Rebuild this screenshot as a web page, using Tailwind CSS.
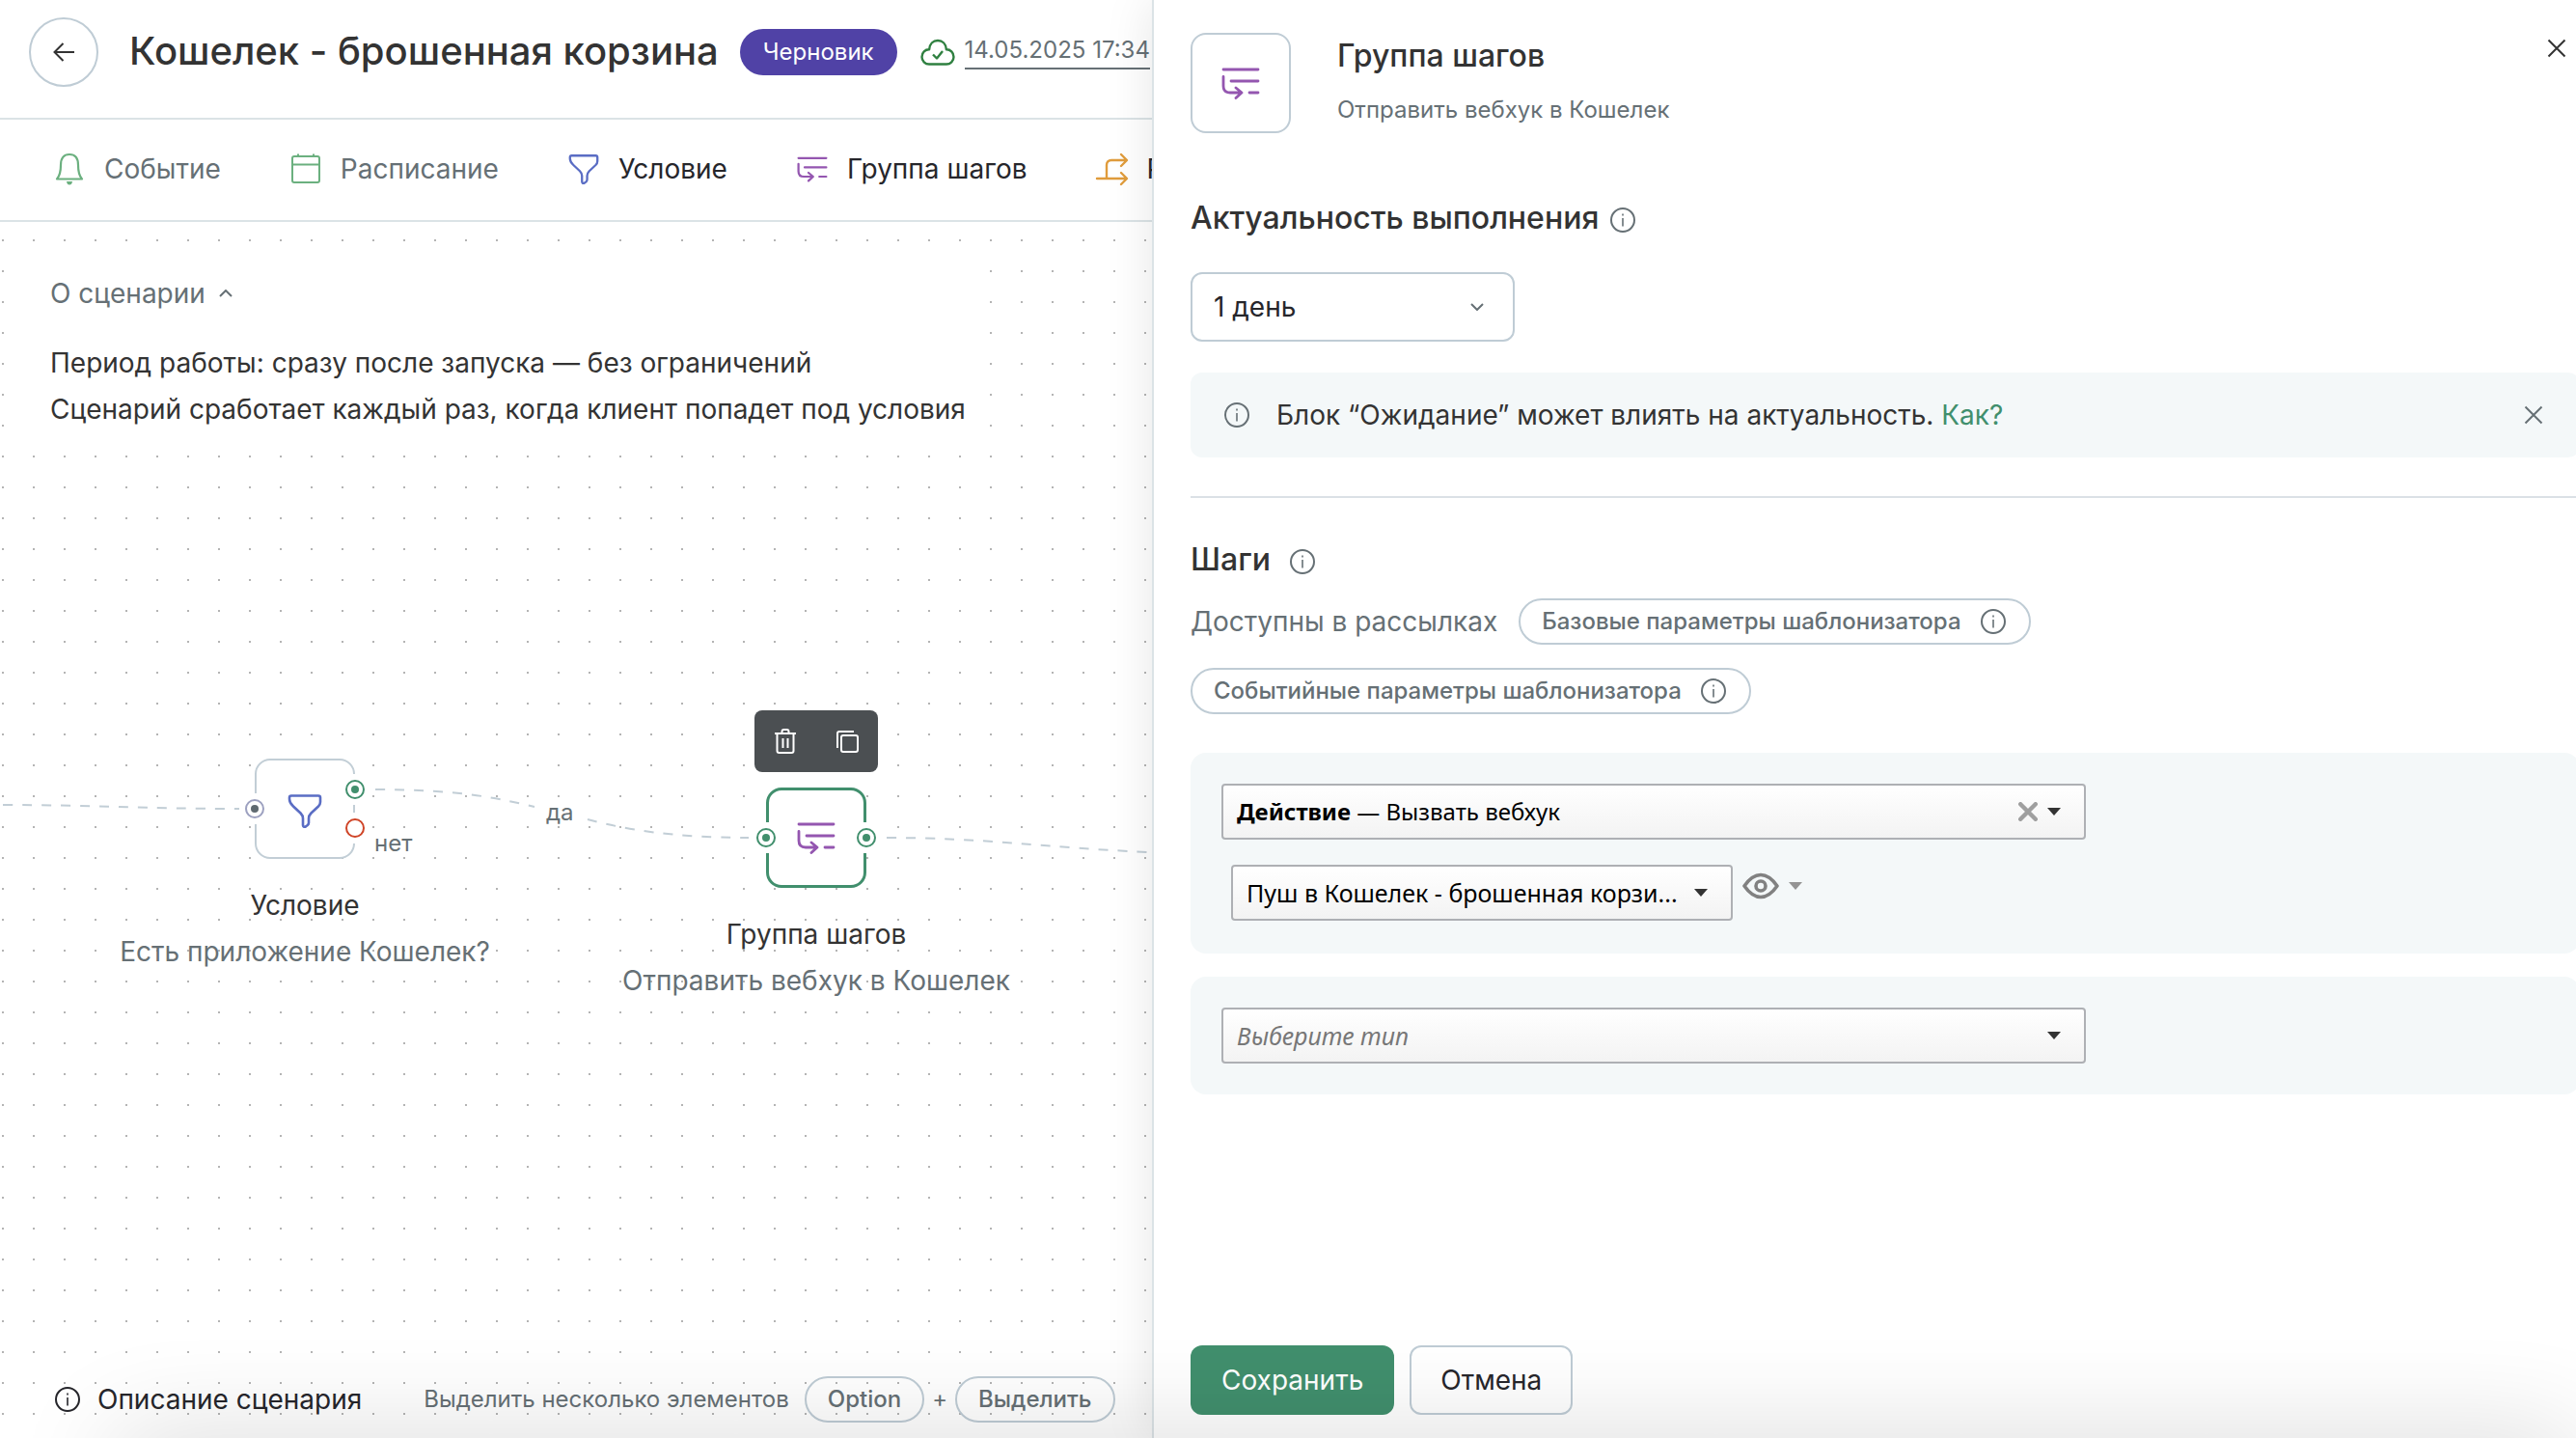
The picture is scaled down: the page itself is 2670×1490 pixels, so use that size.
<!DOCTYPE html>
<html lang="ru">
<head>
    <meta charset="UTF-8">
    <meta name="viewport" content="width=device-width, initial-scale=1.0">
    <title>Кошелек - брошенная корзина</title>
    <script src="https://cdn.jsdelivr.net/npm/@tailwindcss/browser@4"></script>
</head>
<body class="relative flex h-screen overflow-hidden bg-white font-['Inter','Noto_Sans',sans-serif] text-[28px] leading-[36px] text-[#333333]">

    <!-- Icons -->
    <svg class="hidden">
        <symbol id="info" viewBox="0 0 26 26" fill="none" stroke="currentColor">
            <circle cx="13" cy="13" r="12" stroke-width="2"/>
            <path d="M13 11v8.500" stroke-width="1.600"/>
            <path d="M13 6.500v2" stroke-width="1.600"/>
        </symbol>
        <symbol id="funnel" viewBox="0 0 36 36" fill="none" stroke="currentColor" stroke-width="2.600" stroke-linejoin="round">
            <path d="M4 2.500h28q2 0 2 2v4.500q0 2.500-2 4.500l-7.500 7q-2.500 2.500-2.500 5.500v4.500q0 1.500-1.200 2.500l-2 1.500q-2.300 1.200-2.800-1.500v-7q0-3-2.500-5.500l-7.500-7q-4-3.500-4-7.500v-1.500q0-2 2-2z"/>
        </symbol>
        <symbol id="steps" viewBox="0 0 40 34" fill="none" stroke="currentColor" stroke-width="2.800" stroke-linecap="round" stroke-linejoin="round">
            <path d="M2 3h36M10 15h28M29 27h9M2 10.500v9.500q0 7 7 7h11M15 22l6 5-6 5.500"/>
        </symbol>
        <symbol id="close" viewBox="0 0 20 20" fill="none" stroke="currentColor" stroke-width="2">
            <path d="M1.500 1.500l17 17M18.500 1.500l-17 17"/>
        </symbol>
        <symbol id="caret" viewBox="0 0 14 8"><path d="M0 0h14l-7 8z" fill="currentColor"/></symbol>
        <symbol id="chevron" viewBox="0 0 14 8" fill="none" stroke="currentColor" stroke-width="2"><path d="M1 1l6 6 6-6"/></symbol>
    </svg>

    <main class="flex min-w-0 flex-1 flex-col overflow-hidden whitespace-nowrap">
        <header class="flex h-[124px] shrink-0 items-start border-b-2 border-[#dbe3e6] pt-[18px] pl-[30px]">
            <button class="grid size-[72px] shrink-0 place-items-center rounded-full border-2 border-[#bfccd5]" aria-label="Назад">
                <svg class="h-[20px] w-[22px]" viewBox="0 0 22 20" fill="none" stroke="#333333" stroke-width="2"><path d="M22 10H2M10.500 1l-9 9 9 9"/></svg>
            </button>
            <h1 class="ml-8 text-[40px] leading-[70px] font-medium">Кошелек - брошенная корзина</h1>
            <span class="mt-3 ml-[22px] h-[48px] rounded-full bg-[#5042a6] px-6 text-[24px] leading-[48px] text-white">Черновик</span>
            <svg class="mt-[22px] ml-6 h-[28px] w-[36px] shrink-0" viewBox="0 0 36 28" fill="none" stroke="#2f8040" stroke-width="2.400" stroke-linejoin="round">
                <path d="M9 26.500h18a7.500 7.500 0 0 0 7.500-7.500c0-4.500-3.500-7.800-7.600-7.700C26.500 5.500 23 2 18 2S9.500 5.500 9.100 11.300C5 11.200 1.500 14.500 1.500 19A7.500 7.500 0 0 0 9 26.500z"/>
                <path d="M13 16.500l4 4 6-7.500"/>
            </svg>
            <a href="#" class="mt-4 ml-[10px] border-b-2 border-[#667075] text-[24px] text-[#667075]">14.05.2025 17:34</a>
        </header>

        <nav class="flex h-[106px] shrink-0 items-center gap-[68px] border-b-2 border-[#dbe3e6] pb-[2px] pl-[52px] text-[#26262b]">
            <button class="flex shrink-0 items-center gap-4 text-[#667075]">
                <svg class="size-[40px]" viewBox="0 0 40 40" fill="none" stroke="#6bb07f" stroke-width="2.200" stroke-linejoin="round">
                    <path d="M7 30.500q4-4.500 4-14.500c0-7 3-11 9-11s9 4 9 11q0 10 4 14.500z"/>
                    <path d="M17 33h6q-.5 3.500-3 3.500t-3-3.500z" fill="#6bb07f" stroke="none"/>
                </svg>
                Событие
            </button>
            <button class="flex shrink-0 items-center gap-4 text-[#667075]">
                <svg class="size-[40px]" viewBox="0 0 40 40" fill="none" stroke="#6bb07f" stroke-width="2"><rect x="6" y="7" width="28" height="27" rx="2"/><path d="M6 15.500h28M12 7V4.500M28 7V4.500"/></svg>
                Расписание
            </button>
            <button class="flex shrink-0 items-center gap-4">
                <svg class="size-[40px] p-1 text-[#5a6dc4]"><use href="#funnel"/></svg>
                Условие
            </button>
            <button class="flex shrink-0 items-center gap-4">
                <svg class="size-[40px] p-1 text-[#9456b0]"><use href="#steps"/></svg>
                Группа шагов
            </button>
            <button class="flex shrink-0 items-center gap-4">
                <svg class="size-[40px]" viewBox="0 0 40 40" fill="none" stroke="#e09c3c" stroke-width="2.400" stroke-linecap="round" stroke-linejoin="round">
                    <path d="M4 30h30M14 30V16q0-5 5-5h15M29 5l6 6-6 6M29 24l6 6-6 6"/>
                </svg>
                Разделение
            </button>
        </nav>

        <!-- Canvas -->
        <div class="relative flex flex-1 flex-col justify-between overflow-hidden">
            <svg class="absolute inset-0 h-full w-full">
                <defs>
                    <pattern id="dots" width="32" height="32" patternUnits="userSpaceOnUse"><rect x="2" y="18" width="2" height="2" fill="#b4b4b4"/></pattern>
                </defs>
                <rect width="100%" height="100%" fill="url(#dots)"/>
                <g fill="none" stroke="#c2ced6" stroke-width="2" stroke-dasharray="10 10">
                    <path d="M3 604C90 604 150 608 248 608"/>
                    <path d="M389 588C480 588 520 598 554 606"/>
                    <path d="M609 619C650 630 700 638 776 638"/>
                    <path d="M919 638C1020 638 1080 648 1190 653H1260"/>
                </g>
            </svg>

            <section class="relative mt-6 ml-5 flex w-[1000px] flex-col items-start bg-white px-8 pt-8">
                <button class="flex items-center gap-[14px] text-[#667075]">
                    О сценарии
                    <svg class="h-2 w-[14px] rotate-180"><use href="#chevron"/></svg>
                </button>
                <p class="mt-[30px] leading-[48px]">Период работы: сразу после запуска — без ограничений<br>Сценарий сработает каждый раз, когда клиент попадет под условия</p>
            </section>

            <!-- Condition node -->
            <div class="absolute top-[556px] left-[264px] flex w-[104px] flex-col items-center">
                <div class="relative grid size-[104px] place-items-center">
                    <div class="absolute inset-0 rounded-2xl border-2 border-[#c2ced6] bg-white"></div>
                    <svg class="relative mt-1 size-[36px] text-[#5a6dc4]"><use href="#funnel"/></svg>
                    <span class="absolute top-9 -left-4 grid size-8 place-items-center bg-white"><i class="grid size-5 place-items-center rounded-full border-2 border-[#9da1c0]"><i class="size-2 rounded-full bg-[#5f6a70]"></i></i></span>
                    <span class="absolute top-4 -right-4 grid size-8 place-items-center bg-white"><i class="grid size-5 place-items-center rounded-full border-2 border-[#418f6d]"><i class="size-2 rounded-full bg-[#418f6d]"></i></i></span>
                    <span class="absolute top-14 -right-4 grid size-8 place-items-center bg-white"><i class="size-5 rounded-full border-2 border-[#cf4427]"></i></span>
                    <span class="absolute top-[70px] left-[124px] text-[24px] text-[#667075]">нет</span>
                </div>
                <p class="mt-6 leading-[48px]">Условие</p>
                <p class="leading-[48px] text-[#667075]">Есть приложение Кошелек?</p>
            </div>
            <span class="absolute top-[594px] left-[566px] text-[24px] text-[#667075]">да</span>

            <!-- Step group node -->
            <div class="absolute top-[506px] left-[782px] flex h-[64px] w-[128px] rounded-lg bg-[#4b4f52] text-white">
                <button class="grid flex-1 place-items-center" aria-label="Удалить">
                    <svg class="size-[28px]" viewBox="0 0 28 28" fill="none" stroke="currentColor" stroke-width="2"><path d="M3 6h22M5.500 6v18q0 2 2 2h13q2 0 2-2V6M10.500 6V4q0-2 2-2h3q2 0 2 2v2M11.500 11v10M16.500 11v10"/></svg>
                </button>
                <button class="grid flex-1 place-items-center" aria-label="Копировать">
                    <svg class="size-[28px]" viewBox="0 0 28 28" fill="none" stroke="currentColor" stroke-width="2"><rect x="8" y="8" width="17" height="17" rx="2"/><path d="M4 21V6q0-2 2-2h15"/></svg>
                </button>
            </div>
            <div class="absolute top-[586px] left-[794px] flex w-[104px] flex-col items-center">
                <div class="relative grid size-[104px] place-items-center">
                    <div class="absolute inset-0 rounded-2xl border-3 border-[#418f6d] bg-white"></div>
                    <svg class="relative h-[34px] w-[40px] text-[#9456b0]"><use href="#steps"/></svg>
                    <span class="absolute top-9 -left-4 grid size-8 place-items-center bg-white"><i class="grid size-5 place-items-center rounded-full border-2 border-[#418f6d]"><i class="size-2 rounded-full bg-[#418f6d]"></i></i></span>
                    <span class="absolute top-9 -right-4 grid size-8 place-items-center bg-white"><i class="grid size-5 place-items-center rounded-full border-2 border-[#418f6d]"><i class="size-2 rounded-full bg-[#418f6d]"></i></i></span>
                </div>
                <p class="mt-6 leading-[48px]">Группа шагов</p>
                <p class="leading-[48px] text-[#667075]">Отправить вебхук в Кошелек</p>
            </div>

            <footer class="relative mb-4 flex items-center pl-[57px] text-[24px] text-[#667075]">
                <button class="flex items-center gap-[18px] text-[28px] text-[#26262b]">
                    <svg class="size-[26px]"><use href="#info"/></svg>
                    Описание сценария
                </button>
                <span class="ml-16">Выделить несколько элементов</span>
                <kbd class="ml-4 h-[48px] rounded-full border-2 border-[#bfccd5] px-[22px] font-['Inter','Noto_Sans',sans-serif] leading-[44px] font-medium">Option</kbd>
                <span class="mx-2">+</span>
                <kbd class="h-[48px] rounded-full border-2 border-[#bfccd5] px-[22px] font-['Inter','Noto_Sans',sans-serif] leading-[44px] font-medium">Выделить</kbd>
            </footer>
        </div>
    </main>

    <!-- Step group settings -->
    <aside class="relative -mr-1 flex w-[1480px] shrink-0 flex-col border-l-2 border-[#dbe3e6] bg-white pt-[34px] pb-6 pl-[38px] shadow-[0_0_48px_rgba(0,0,0,0.1)]">
        <div class="flex">
            <div class="grid size-[104px] place-items-center rounded-2xl border-2 border-[#bfccd5]">
                <svg class="h-[34px] w-[40px] text-[#9456b0]"><use href="#steps"/></svg>
            </div>
            <div class="ml-12">
                <h2 class="text-[32px] leading-[48px] font-medium">Группа шагов</h2>
                <p class="mt-[14px] text-[24px] text-[#667075]">Отправить вебхук в Кошелек</p>
            </div>
            <button class="mr-2 ml-auto grid size-8 place-items-center" aria-label="Закрыть">
                <svg class="size-5"><use href="#close"/></svg>
            </button>
        </div>

        <div class="mt-[68px] flex items-center gap-3">
            <label for="relevance" class="text-[32px] leading-[40px] font-medium">Актуальность выполнения</label>
            <svg class="mt-1 size-[26px] text-[#667075]"><use href="#info"/></svg>
        </div>
        <div class="relative mt-9 h-[72px] w-[336px]">
            <select id="relevance" class="h-full w-full appearance-none rounded-xl border-2 border-[#bfccd5] bg-white px-[22px] text-[#26262b]">
                <option>1 день</option>
            </select>
            <svg class="pointer-events-none absolute top-8 right-8 h-2 w-[14px] text-[#667075]"><use href="#chevron"/></svg>
        </div>

        <div class="mt-8 flex h-[88px] items-center rounded-xl bg-[#f4f8f9] px-8">
            <svg class="ml-[3px] size-[26px] text-[#667075]"><use href="#info"/></svg>
            <p class="ml-7">Блок “Ожидание” может влиять на актуальность. <a href="#" class="text-[#418f6d]">Как?</a></p>
            <button class="ml-auto grid size-8 place-items-center text-[#667075]" aria-label="Скрыть">
                <svg class="size-5"><use href="#close"/></svg>
            </button>
        </div>

        <hr class="mt-10 border-t-2 border-[#dbe1e6]">

        <div class="mt-11 flex items-center gap-5">
            <h3 class="text-[32px] leading-[40px] font-medium">Шаги</h3>
            <svg class="mt-1 size-[26px] text-[#667075]"><use href="#info"/></svg>
        </div>
        <div class="mt-5 flex w-[1000px] flex-wrap items-center gap-x-[22px] gap-y-6 text-[#667075]">
            <span>Доступны в рассылках</span>
            <button class="flex h-[48px] items-center gap-5 rounded-full border-2 border-[#bfccd5] px-[22px] text-[24px] font-medium">
                Базовые параметры шаблонизатора
                <svg class="mr-[2px] size-[26px]"><use href="#info"/></svg>
            </button>
            <button class="flex h-[48px] items-center gap-5 rounded-full border-2 border-[#bfccd5] px-[22px] text-[24px] font-medium">
                Событийные параметры шаблонизатора
                <svg class="mr-[2px] size-[26px]"><use href="#info"/></svg>
            </button>
        </div>

        <div class="mt-10 rounded-2xl bg-[#f4f8f9] px-8 pt-8 pb-[34px] font-['Noto_Sans',sans-serif] text-[25px] text-black">
            <div class="flex h-[58px] w-[896px] items-center rounded-sm border-2 border-[#aeb0b4] bg-linear-to-b from-white to-[#f3f3f3] pr-6">
                <button class="h-full flex-1 pl-[14px] text-left text-[24px]" aria-haspopup="listbox"><b>Действие</b> — Вызвать вебхук</button>
                <button class="text-[#9f9f9f]" aria-label="Очистить">
                    <svg class="size-5" viewBox="0 0 18 18" stroke="currentColor" stroke-width="4" stroke-linecap="round"><path d="M2 2l14 14M16 2L2 16"/></svg>
                </button>
                <svg class="ml-[10px] h-2 w-[14px] text-[#333333]"><use href="#caret"/></svg>
            </div>
            <div class="mt-[26px] ml-[10px] flex items-start">
                <div class="relative h-[58px] w-[520px]">
                    <select class="h-full w-full appearance-none rounded-sm border-2 border-[#aeb0b4] bg-linear-to-b from-white to-[#f3f3f3] pl-[14px]" aria-label="Вебхук">
                        <option>Пуш в Кошелек - брошенная корзи...</option>
                    </select>
                    <svg class="pointer-events-none absolute top-[25px] right-[26px] h-2 w-[14px] text-[#333333]"><use href="#caret"/></svg>
                </div>
                <button class="mt-2 ml-[10px] flex items-center gap-[10px]" aria-label="Просмотр">
                    <svg class="h-[28px] w-[38px]" viewBox="0 0 38 28" fill="none" stroke="#818181" stroke-width="3.600" stroke-linejoin="round"><path d="M2 14Q10 2.500 19 2.500T36 14Q28 25.500 19 25.500T2 14z"/><circle cx="19" cy="14" r="5"/></svg>
                    <svg class="h-2 w-[14px] text-[#949494]"><use href="#caret"/></svg>
                </button>
            </div>
        </div>

        <div class="mt-6 rounded-2xl bg-[#f4f8f9] p-8 font-['Noto_Sans',sans-serif] text-[25px] text-[#777777]">
            <div class="relative h-[58px] w-[896px]">
                <select class="h-full w-full appearance-none rounded-sm border-2 border-[#aeb0b4] bg-linear-to-b from-white to-[#f3f3f3] pl-[14px] italic" aria-label="Тип">
                    <option>Выберите тип</option>
                </select>
                <svg class="pointer-events-none absolute top-[25px] right-[26px] h-2 w-[14px] text-[#333333]"><use href="#caret"/></svg>
            </div>
        </div>

        <div class="mt-auto flex gap-4">
            <button class="h-[72px] rounded-xl bg-[#418f6d] px-8 text-white">Сохранить</button>
            <button class="h-[72px] rounded-xl border-2 border-[#bfccd5] px-[30px] text-[#26262b]">Отмена</button>
        </div>
    </aside>

    <!-- Soft shade along the bottom edge -->
    <div class="pointer-events-none absolute inset-0 overflow-hidden">
        <div class="absolute top-full right-0 left-[120px] h-20 shadow-[0_0_110px_rgba(0,0,0,0.16)]"></div>
    </div>
</body>
</html>
